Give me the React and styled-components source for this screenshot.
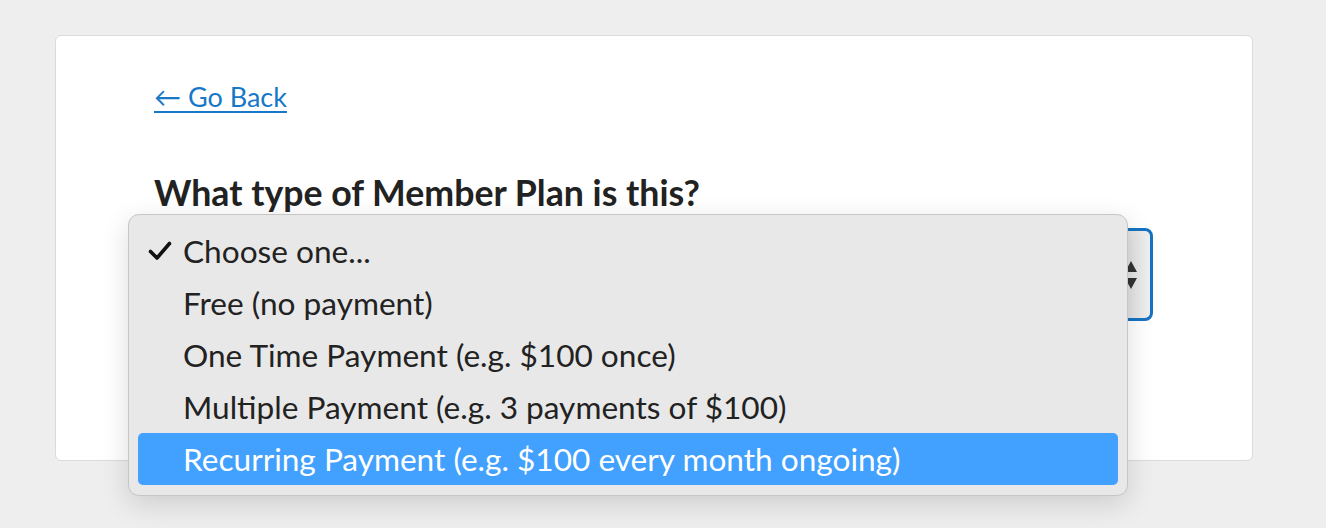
import React from 'react';
import styled, { createGlobalStyle } from 'styled-components';

const GlobalStyle = createGlobalStyle`
  html, body {
    margin: 0;
    padding: 0;
    background: #eeeeee;
    font-family: Lato, "Noto Sans", sans-serif;
  }
`;

const Page = styled.div`
  padding: 35px 0 0 55px;
  height: 528px;
  box-sizing: border-box;
`;

const Card = styled.div`
  width: 1198px;
  height: 426px;
  box-sizing: border-box;
  background: #fff;
  border: 1px solid #dadada;
  border-radius: 6px;
  padding: 45px 98px;
`;

const BackLink = styled.a`
  display: block;
  width: fit-content;
  color: #1878c8;
  font-size: 27px;
  line-height: 1.2;
  text-decoration: underline;
  text-underline-offset: 4px;
  text-decoration-thickness: 2px;
  cursor: pointer;
`;

const Question = styled.h2`
  margin: 59px 0 13px;
  font-size: 35.7px;
  font-weight: 700;
  color: #222;
  line-height: 1.2;
`;

const SelectWrap = styled.div`
  position: relative;
  width: 999px;
`;

const SelectBox = styled.div`
  height: 93px;
  box-sizing: border-box;
  border: 3px solid #1673c2;
  border-radius: 8px;
  background: linear-gradient(to right, #f4f4f4 94%, #dcdcdc 97%, #f0f0f0);
  display: flex;
  justify-content: flex-end;
  align-items: center;
  padding-right: 13px;
`;

const Menu = styled.ul`
  position: absolute;
  left: -26px;
  top: -14px;
  width: 1000px;
  box-sizing: border-box;
  margin: 0;
  padding: 10px 9px;
  list-style: none;
  background: #e8e8e8;
  border: 1px solid #c6c6c6;
  border-radius: 11px;
  box-shadow: 0 8px 28px rgba(0, 0, 0, 0.14);
`;

const Option = styled.li`
  height: 52px;
  display: flex;
  align-items: center;
  padding-left: 10px;
  border-radius: 5px;
  font-size: 31.6px;
  color: ${(p) => (p.$active ? '#fff' : '#222')};
  background: ${(p) => (p.$active ? '#42a0fe' : 'transparent')};
`;

const Check = styled.span`
  width: 35px;
  flex: none;
  display: flex;
  align-items: center;
`;

const options = [
  'Choose one...',
  'Free (no payment)',
  'One Time Payment (e.g. $100 once)',
  'Multiple Payment (e.g. 3 payments of $100)',
  'Recurring Payment (e.g. $100 every month ongoing)',
];

const Arrows = () => (
  <svg width="12" height="30" viewBox="0 0 12 30">
    <path d="M6 1 L12 12 L0 12 Z" fill="#333" />
    <path d="M6 29 L12 18 L0 18 Z" fill="#333" />
  </svg>
);

const CheckMark = () => (
  <svg width="24" height="20" viewBox="0 0 24 20">
    <path
      d="M2.5 10.5 L9 17 L21.5 2.5"
      fill="none"
      stroke="#111"
      strokeWidth="3.6"
      strokeLinecap="round"
      strokeLinejoin="round"
    />
  </svg>
);

export default function App() {
  return (
    <>
      <GlobalStyle />
      <Page>
        <Card>
          <BackLink>← Go Back</BackLink>
          <Question>What type of Member Plan is this?</Question>
          <SelectWrap>
            <SelectBox>
              <Arrows />
            </SelectBox>
            <Menu>
              {options.map((o, i) => (
                <Option key={o} $active={i === options.length - 1}>
                  <Check>{i === 0 && <CheckMark />}</Check>
                  {o}
                </Option>
              ))}
            </Menu>
          </SelectWrap>
        </Card>
      </Page>
    </>
  );
}
